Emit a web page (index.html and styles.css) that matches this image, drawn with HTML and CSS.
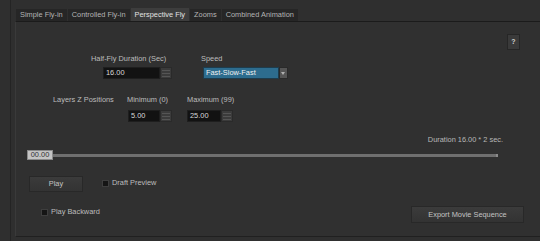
FILE: index.html
```html
<!doctype html>
<html lang="en">
  <head>
    <meta charset="UTF-8" />
    <title>Perspective Fly</title>
    <link rel="stylesheet" href="styles.css">
  </head>
  <body>
    <div class="frame">
      <div class="tabs">
        <div class="tab">Simple Fly-in</div>
        <div class="tab">Controlled Fly-in</div>
        <div class="tab active">Perspective Fly</div>
        <div class="tab">Zooms</div>
        <div class="tab">Combined Animation</div>
      </div>

      <div class="pane">
        <div class="help-row">
          <button type="button" class="help">?</button>
        </div>

        <div class="row row-top">
          <div class="field f-duration">
            <div class="label">Half-Fly Duration (Sec)</div>
            <div class="spin-input">
              <div class="value w57">16.00</div>
              <div class="spin"></div>
            </div>
          </div>
          <div class="field f-speed">
            <div class="label">Speed</div>
            <div class="select">
              <div class="select-value">Fast-Slow-Fast</div>
              <div class="select-arrow"></div>
            </div>
          </div>
        </div>

        <div class="row row-z">
          <div class="field f-layers">
            <div class="label">Layers Z Positions</div>
          </div>
          <div class="field f-min">
            <div class="label">Minimum (0)</div>
            <div class="spin-input">
              <div class="value w32">5.00</div>
              <div class="spin"></div>
            </div>
          </div>
          <div class="field f-max">
            <div class="label">Maximum (99)</div>
            <div class="spin-input">
              <div class="value w34">25.00</div>
              <div class="spin"></div>
            </div>
          </div>
        </div>

        <div class="duration">Duration 16.00 * 2 sec.</div>

        <div class="slider">
          <div class="handle">00.00</div>
          <div class="track"></div>
        </div>

        <div class="row row-play">
          <button type="button" class="button play">Play</button>
          <label class="check draft"><span class="box"></span>Draft Preview</label>
        </div>

        <div class="row row-bottom">
          <label class="check backward"><span class="box"></span>Play Backward</label>
          <button type="button" class="button export">Export Movie Sequence</button>
        </div>
      </div>
    </div>
  </body>
</html>
```

FILE: styles.css
```css
* {
  margin: 0;
  padding: 0;
  box-sizing: border-box;
}

html,
body {
  height: 100%;
  background-color: #2f2f2f;
  color: #bdbdbd;
  font-family: "Liberation Sans", Arial, sans-serif;
  font-size: 7.4px;
  line-height: 10px;
}

.frame {
  margin-left: 10px;
  height: 100%;
  border-left: 1px solid #242424;
  padding: 8px 0 0 4px;
}

/* tabs */
.tabs {
  display: flex;
  align-items: flex-end;
  gap: 1px;
  height: 13px;
  padding-left: 1px;
}

.tab {
  height: 12px;
  padding: 1px 4px 0;
  background-color: #262626;
  color: #b4b4b4;
  white-space: nowrap;
}

.tab.active {
  height: 13px;
  padding-top: 2px;
  background-color: #3d3d3d;
  color: #e2e2e2;
}

/* pane */
.pane {
  display: flex;
  flex-direction: column;
  height: 216px;
  border-top: 1px solid #1b1b1b;
  border-left: 1px solid #3a3a3a;
  border-bottom: 1px solid #202020;
  background-color: #303030;
}

.help-row {
  display: flex;
  justify-content: flex-end;
  margin-top: 12px;
  padding-right: 20px;
}

.help {
  width: 13px;
  height: 16px;
  background-color: #3a3a3a;
  border: 1px solid #262626;
  color: #d0d0d0;
  font: inherit;
  font-size: 7px;
  font-weight: bold;
}

.row {
  display: flex;
}

.field {
  display: flex;
  flex-direction: column;
}

.label {
  white-space: nowrap;
}

.row-top {
  margin-top: 4px;
}

.row-top .spin-input,
.row-top .select {
  margin-top: 3px;
}

.f-duration {
  margin-left: 75px;
  width: 110px;
}

.f-duration .spin-input {
  margin-left: 12px;
}

.f-speed .select {
  margin-left: 2px;
}

.row-z {
  margin-top: 16px;
}

.row-z .spin-input {
  margin-top: 5px;
}

.f-layers {
  margin-left: 37px;
  width: 74px;
}

.f-min {
  width: 60px;
}

.f-min .spin-input {
  margin-left: 1px;
}

/* spin inputs */
.spin-input {
  display: flex;
  height: 12px;
}

.value {
  height: 12px;
  padding-left: 2px;
  background-color: #121212;
  border: 1px solid #1e1e1e;
  color: #d8d8d8;
  line-height: 10px;
}

.w57 { width: 57px; }
.w32 { width: 32px; }
.w34 { width: 34px; }

.spin {
  width: 12px;
  height: 12px;
  background-color: #3b3b3b;
  border: 1px solid #2a2a2a;
  background-image:
    linear-gradient(#555, #555),
    linear-gradient(#555, #555),
    linear-gradient(#555, #555);
  background-size: 8px 1px;
  background-repeat: no-repeat;
  background-position: 1px 2px, 1px 5px, 1px 8px;
}

/* select */
.select {
  display: flex;
  height: 12px;
}

.select-value {
  width: 76px;
  padding-left: 2px;
  background-color: #2d6c8e;
  border: 1px solid #1d3c4d;
  color: #f0f0f0;
  line-height: 10px;
}

.select-arrow {
  position: relative;
  width: 9px;
  background-color: #555;
  border: 1px solid #2a2a2a;
}

.select-arrow::after {
  content: "";
  position: absolute;
  left: 1px;
  top: 4px;
  border-left: 2.5px solid transparent;
  border-right: 2.5px solid transparent;
  border-top: 3px solid #b0b0b0;
}

/* timeline */
.duration {
  margin-top: 13px;
  padding-right: 37px;
  text-align: right;
  color: #b8b8b8;
}

.slider {
  display: flex;
  align-items: center;
  margin-top: 5px;
  margin-left: 11px;
  height: 10px;
}

.handle {
  width: 26px;
  height: 10px;
  background-color: #c4c4c4;
  border: 1px solid #8a8a8a;
  color: #333;
  text-align: center;
  line-height: 8px;
}

.track {
  width: 445px;
  height: 3px;
  background-color: #6f6f6f;
  border-right: 2px solid #8a8a8a;
}

/* buttons and checks */
.button {
  height: 16px;
  background: linear-gradient(#3b3b3b, #333);
  border: 1px solid #282828;
  color: #c4c4c4;
  font: inherit;
}

.row-play {
  margin-top: 16px;
  align-items: flex-start;
}

.play {
  width: 54px;
  margin-left: 13px;
}

.check {
  display: flex;
  align-items: center;
  gap: 3px;
  height: 10px;
  white-space: nowrap;
}

.box {
  width: 7px;
  height: 7px;
  background-color: #151515;
  border: 1px solid #3e3e3e;
}

.draft {
  margin-left: 19px;
  margin-top: 2px;
}

.row-bottom {
  margin-top: 14px;
  align-items: flex-start;
  justify-content: space-between;
  padding-right: 16px;
}

.backward {
  margin-left: 25px;
  margin-top: 1px;
}

.export {
  width: 113px;
  height: 17px;
}
```
